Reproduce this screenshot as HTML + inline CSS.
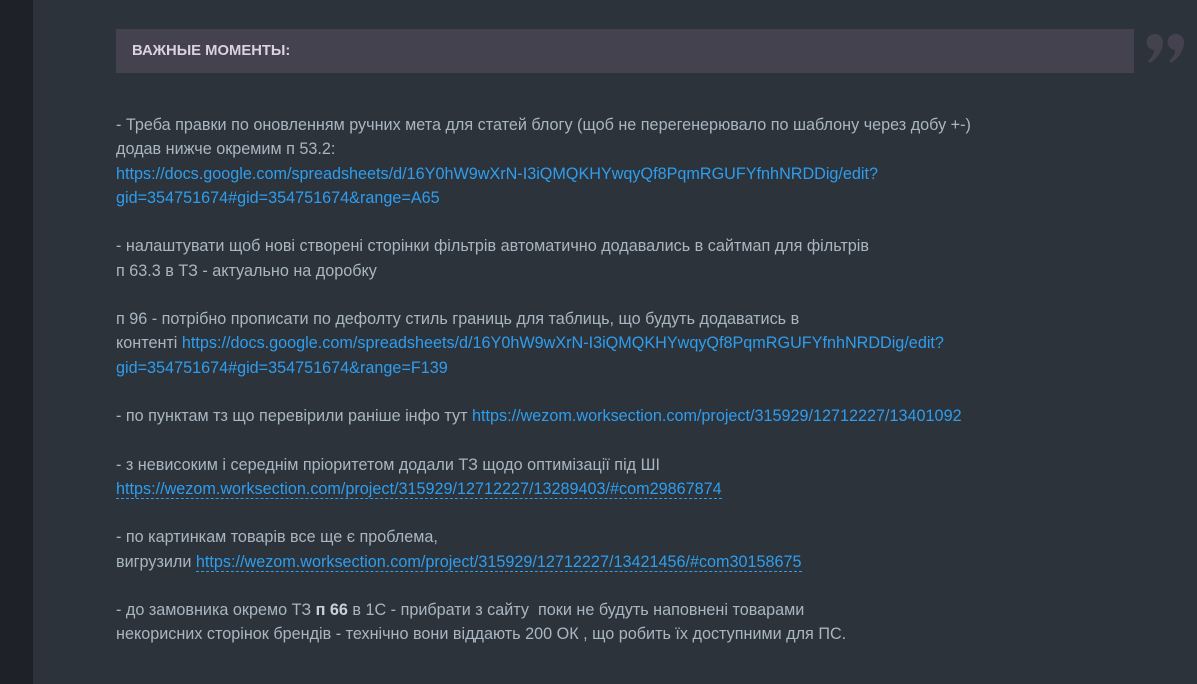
<!DOCTYPE html>
<html><head><meta charset="utf-8"><style>
html,body{margin:0;padding:0;width:1197px;height:684px;overflow:hidden;background:#2c333b;}
.side{position:absolute;left:0;top:0;width:33px;height:684px;background:#1e2228;}
.hdr{position:absolute;left:116px;top:29px;width:1018px;height:44px;background:#44424f;}
.hdr span{position:absolute;left:16px;top:14px;font:bold 14.8px "Liberation Sans",sans-serif;color:#ddd0e0;}
.q{position:absolute;left:1146px;top:33px;}
.txt{position:absolute;left:116px;top:113px;width:1060px;font:16.2px/24.25px "Liberation Sans","DejaVu Sans",sans-serif;color:#a9b6c1;white-space:nowrap;}
a{color:#2f9ded;text-decoration:none;}
a.d{border-bottom:1px dashed #2f9ded;}
b{color:#c9d2da;}
</style></head><body>
<div class="side"></div>
<div class="hdr"><span>ВАЖНЫЕ МОМЕНТЫ:</span></div>
<svg class="q" width="42" height="32" viewBox="0 0 42 32">
<path fill="#44424f" d="M9 1a8 8 0 0 1 8 8c0 8-5 16-13 21l-2-2c4-4 6-7 6-11A8 8 0 0 1 9 1z"/>
<path fill="#44424f" d="M30 1a8 8 0 0 1 8 8c0 8-5 16-13 21l-2-2c4-4 6-7 6-11A8 8 0 0 1 30 1z"/>
</svg>
<div class="txt">
- Треба правки по оновленням ручних мета для статей блогу (щоб не перегенерювало по шаблону через добу +-)<br>
додав нижче окремим п 53.2:<br>
<a>https://docs.google.com/spreadsheets/d/16Y0hW9wXrN-I3iQMQKHYwqyQf8PqmRGUFYfnhNRDDig/edit?<br>gid=354751674#gid=354751674&amp;range=A65</a><br><br>
- налаштувати щоб нові створені сторінки фільтрів автоматично додавались в сайтмап для фільтрів<br>
п 63.3 в ТЗ - актуально на доробку<br><br>
п 96 - потрібно прописати по дефолту стиль границь для таблиць, що будуть додаватись в<br>
контенті <a>https://docs.google.com/spreadsheets/d/16Y0hW9wXrN-I3iQMQKHYwqyQf8PqmRGUFYfnhNRDDig/edit?<br>gid=354751674#gid=354751674&amp;range=F139</a><br><br>
- по пунктам тз що перевірили раніше інфо тут <a>https://wezom.worksection.com/project/315929/12712227/13401092</a><br><br>
- з невисоким і середнім пріоритетом додали ТЗ щодо оптимізації під ШІ<br>
<a class="d">https://wezom.worksection.com/project/315929/12712227/13289403/#com29867874</a><br><br>
- по картинкам товарів все ще є проблема,<br>
вигрузили <a class="d">https://wezom.worksection.com/project/315929/12712227/13421456/#com30158675</a><br><br>
- до замовника окремо ТЗ <b>п 66</b> в 1С - прибрати з сайту &nbsp;поки не будуть наповнені товарами<br>
некорисних сторінок брендів - технічно вони віддають 200 ОК , що робить їх доступними для ПС.
</div>
</body></html>
